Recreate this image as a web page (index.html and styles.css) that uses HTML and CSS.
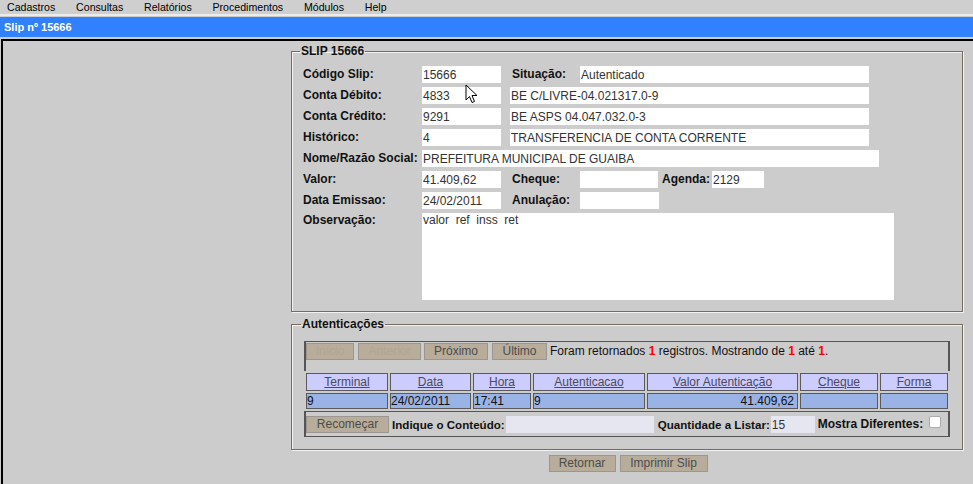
FILE: index.html
```html
<!DOCTYPE html>
<html lang="pt-BR">
<head>
<meta charset="utf-8">
<title>Slip nº 15666</title>
<link rel="stylesheet" href="styles.css">
</head>
<body>
<div class="menubar">
  <span class="menu-item">Cadastros</span>
  <span class="menu-item">Consultas</span>
  <span class="menu-item">Relatórios</span>
  <span class="menu-item">Procedimentos</span>
  <span class="menu-item">Módulos</span>
  <span class="menu-item">Help</span>
</div>
<div class="titlebar">Slip nº 15666</div>
<div class="window">
  <div class="content">
    <fieldset class="box slip">
      <legend>SLIP 15666</legend>
      <div class="row">
        <span class="lbl">Código Slip:</span>
        <input class="fld w79" value="15666" readonly>
        <span class="lbl2">Situação:</span>
        <input class="fld w289" value="Autenticado" readonly>
      </div>
      <div class="row">
        <span class="lbl">Conta Débito:</span>
        <input class="fld w79" value="4833" readonly>
        <input class="fld w359 ml9" value="BE C/LIVRE-04.021317.0-9" readonly>
      </div>
      <div class="row">
        <span class="lbl">Conta Crédito:</span>
        <input class="fld w79" value="9291" readonly>
        <input class="fld w359 ml9" value="BE ASPS 04.047.032.0-3" readonly>
      </div>
      <div class="row">
        <span class="lbl">Histórico:</span>
        <input class="fld w79" value="4" readonly>
        <input class="fld w359 ml9" value="TRANSFERENCIA DE CONTA CORRENTE" readonly>
      </div>
      <div class="row">
        <span class="lbl">Nome/Razão Social:</span>
        <input class="fld w457" value="PREFEITURA MUNICIPAL DE GUAIBA" readonly>
      </div>
      <div class="row">
        <span class="lbl">Valor:</span>
        <input class="fld w79" value="41.409,62" readonly>
        <span class="lbl2">Cheque:</span>
        <input class="fld w78" value="" readonly>
        <span class="lbl3">Agenda:</span>
        <input class="fld w52" value="2129" readonly>
      </div>
      <div class="row">
        <span class="lbl">Data Emissao:</span>
        <input class="fld w79" value="24/02/2011" readonly>
        <span class="lbl2">Anulação:</span>
        <input class="fld w79" value="" readonly>
      </div>
      <div class="row row-obs">
        <span class="lbl">Observação:</span>
        <textarea class="obs" readonly>valor  ref  inss  ret</textarea>
      </div>
    </fieldset>

    <fieldset class="box auth">
      <legend>Autenticações</legend>
      <div class="nav">
        <button class="btn b-ini" disabled>Início</button>
        <button class="btn b-ant" disabled>Anterior</button>
        <button class="btn b-prox">Próximo</button>
        <button class="btn b-ult">Último</button>
        <span class="info">Foram retornados <b class="red">1</b> registros. Mostrando de <b class="red">1</b> até <b class="red">1</b>.</span>
      </div>
      <table class="grid">
        <thead>
          <tr>
            <th class="c1"><a href="#">Terminal</a></th>
            <th class="c2"><a href="#">Data</a></th>
            <th class="c3"><a href="#">Hora</a></th>
            <th class="c4"><a href="#">Autenticacao</a></th>
            <th class="c5"><a href="#">Valor Autenticação</a></th>
            <th class="c6"><a href="#">Cheque</a></th>
            <th class="c7"><a href="#">Forma</a></th>
          </tr>
        </thead>
        <tbody>
          <tr>
            <td>9</td>
            <td>24/02/2011</td>
            <td>17:41</td>
            <td>9</td>
            <td class="num">41.409,62</td>
            <td></td>
            <td></td>
          </tr>
        </tbody>
      </table>
      <div class="filter">
        <button class="btn b-rec">Recomeçar</button>
        <span class="flbl">Indique o Conteúdo:</span>
        <input class="ffld w149" value="" readonly>
        <span class="flbl ml4">Quantidade a Listar:</span>
        <input class="ffld w44" value="15" readonly>
        <span class="flbl ml3 wide">Mostra Diferentes:</span>
        <span class="chk"></span>
      </div>
    </fieldset>

    <div class="actions">
      <button class="btn b-ret">Retornar</button>
      <button class="btn b-imp">Imprimir Slip</button>
    </div>
  </div>
</div>
<svg class="cursor" width="13" height="20" viewBox="0 0 13 20">
  <path d="M1 1 L1 16 L4.5 12.5 L7 18.5 L9.5 17.5 L7 11.5 L12 11.5 Z" fill="#fff" stroke="#000" stroke-width="1" stroke-linejoin="round"/>
</svg>
</body>
</html>
```

FILE: styles.css
```css
* { box-sizing: border-box; }
html, body { margin: 0; padding: 0; }
body {
  background: #cccccc;
  font-family: "Liberation Sans", Arial, sans-serif;
  font-size: 12px;
  color: #111;
  overflow: hidden;
  height: 484px;
  position: relative;
}

.menubar {
  display: flex;
  gap: 20.8px;
  height: 16px;
  padding-left: 7px;
  font-size: 10.6px;
  line-height: 14px;
  color: #000;
  border-bottom: 2px solid #ececec;
  background: #cfcfcf;
}

.titlebar {
  margin-top: 1px;
  height: 20px;
  line-height: 20px;
  padding-left: 4px;
  background: #3080ff;
  color: #fff;
  font-weight: bold;
  font-size: 11px;
}

.window {
  margin-top: 2px;
  margin-left: 1px;
  border-top: 2px solid #000;
  border-left: 2px solid #000;
  height: 445px;
}

.content {
  padding-left: 288px;
  width: 960px;
}

.box {
  margin: 0;
  width: 672px;
  border: 1px solid #746d5e;
  box-shadow: inset 1px 1px 0 #f2f2f2, 1px 1px 0 #f2f2f2;
  min-width: 0;
}
.box legend {
  font-weight: bold;
  font-size: 12px;
  line-height: 14px;
  padding: 0 1px;
  margin-left: -3px;
  color: #111;
}

.slip {
  margin-top: 3px;
  padding: 8px 11px 11px 11px;
}

.row {
  display: flex;
  align-items: center;
  height: 17px;
  margin-bottom: 4px;
}
.row-obs {
  align-items: flex-start;
  height: 87px;
  margin-bottom: 0;
}

.lbl {
  width: 119px;
  flex: none;
  font-weight: bold;
  color: #111;
  line-height: 17px;
}
.row-obs .lbl { line-height: 14px; }
.lbl2 {
  width: 68px;
  margin-left: 11px;
  flex: none;
  font-weight: bold;
  line-height: 17px;
}
.lbl3 {
  width: 50px;
  margin-left: 4px;
  flex: none;
  font-weight: bold;
  line-height: 17px;
}

.fld {
  flex: none;
  height: 17px;
  border: none;
  padding: 0 1px;
  margin: 0;
  background: #fff;
  font-family: "Liberation Sans", Arial, sans-serif;
  font-size: 12px;
  line-height: 15px;
  color: #333;
  outline: none;
}
.w79 { width: 79px; }
.w78 { width: 78px; }
.w52 { width: 52px; }
.w289 { width: 289px; }
.w359 { width: 359px; }
.w457 { width: 457px; }
.ml9 { margin-left: 9px; }

.obs {
  width: 472px;
  height: 87px;
  border: none;
  margin: 0;
  padding: 0 1px;
  resize: none;
  background: #fff;
  font-family: "Liberation Sans", Arial, sans-serif;
  font-size: 12px;
  line-height: 14px;
  color: #333;
  outline: none;
}

.auth {
  margin-top: 5px;
  padding: 10px 12px 12px 12px;
}

.btn {
  height: 17px;
  padding: 0;
  margin: 0;
  border: 1px solid #9b9690;
  background: #b8ac9a;
  color: #4c4c4c;
  font-family: "Liberation Sans", Arial, sans-serif;
  font-size: 12px;
  line-height: 15px;
  flex: none;
}
.btn:disabled { color: #b2a693; }

.nav {
  display: flex;
  align-items: flex-start;
  width: 646px;
  height: 30px;
  border-top: 1px solid #555;
  border-left: 2px solid #555;
  border-right: 2px solid #555;
  padding-top: 1px;
}
.b-ini { width: 48px; margin-right: 4px; }
.b-ant { width: 63px; margin-right: 3px; }
.b-prox { width: 64px; margin-right: 4px; }
.b-ult { width: 55px; margin-right: 3px; }
.info {
  line-height: 17px;
  color: #111;
  white-space: nowrap;
}
.red { color: #ff0000; }

.grid {
  width: 646px;
  border-collapse: separate;
  border-spacing: 2px;
  table-layout: fixed;
}
.grid th, .grid td {
  border: 1px solid #5a5a5a;
  padding: 0;
  font-size: 12px;
  font-weight: normal;
  overflow: hidden;
  white-space: nowrap;
}
.grid th {
  height: 18px;
  background: #ccccff;
  text-align: center;
  line-height: 16px;
}
.grid th a { color: #4a4a5c; text-decoration: underline; }
.grid td {
  height: 16px;
  background: #99b3e6;
  color: #111;
  text-align: left;
  line-height: 14px;
}
.grid td.num { text-align: right; padding-right: 3px; }
.c1 { width: 82px; }
.c2 { width: 81px; }
.c3 { width: 58px; }
.c4 { width: 112px; }
.c5 { width: 151px; }
.c6 { width: 78px; }
.c7 { width: 68px; }

.filter {
  display: flex;
  align-items: flex-start;
  width: 646px;
  height: 26px;
  border-top: 1px solid #555;
  border-left: 2px solid #555;
  border-right: 2px solid #555;
  border-bottom: 1px solid #555;
  padding-top: 4px;
}
.b-rec { width: 83px; }
.flbl {
  font-weight: bold;
  font-size: 11.6px;
  line-height: 17px;
  margin-left: 3px;
  margin-right: 1px;
  white-space: nowrap;
  color: #111;
}
.flbl.wide { font-size: 12px; }
.ml4 { margin-left: 4px; }
.ml3 { margin-left: 3px; }
.ffld {
  flex: none;
  height: 17px;
  border: none;
  margin: 0;
  padding: 0 1px;
  background: #e6e6f0;
  font-family: "Liberation Sans", Arial, sans-serif;
  font-size: 12px;
  color: #333;
  outline: none;
}
.w149 { width: 148px; }
.w44 { width: 44px; }
.chk {
  width: 12px;
  height: 12px;
  margin-left: 5px;
  background: #fff;
  border: 1px solid #aaa;
  border-radius: 2px;
  flex: none;
}

.actions {
  width: 672px;
  display: flex;
  justify-content: center;
  gap: 4px;
  margin-top: 5px;
  padding-left: 2px;
}
.b-ret { width: 67px; }
.b-imp { width: 88px; }

.cursor {
  position: absolute;
  left: 465px;
  top: 84px;
}
```
